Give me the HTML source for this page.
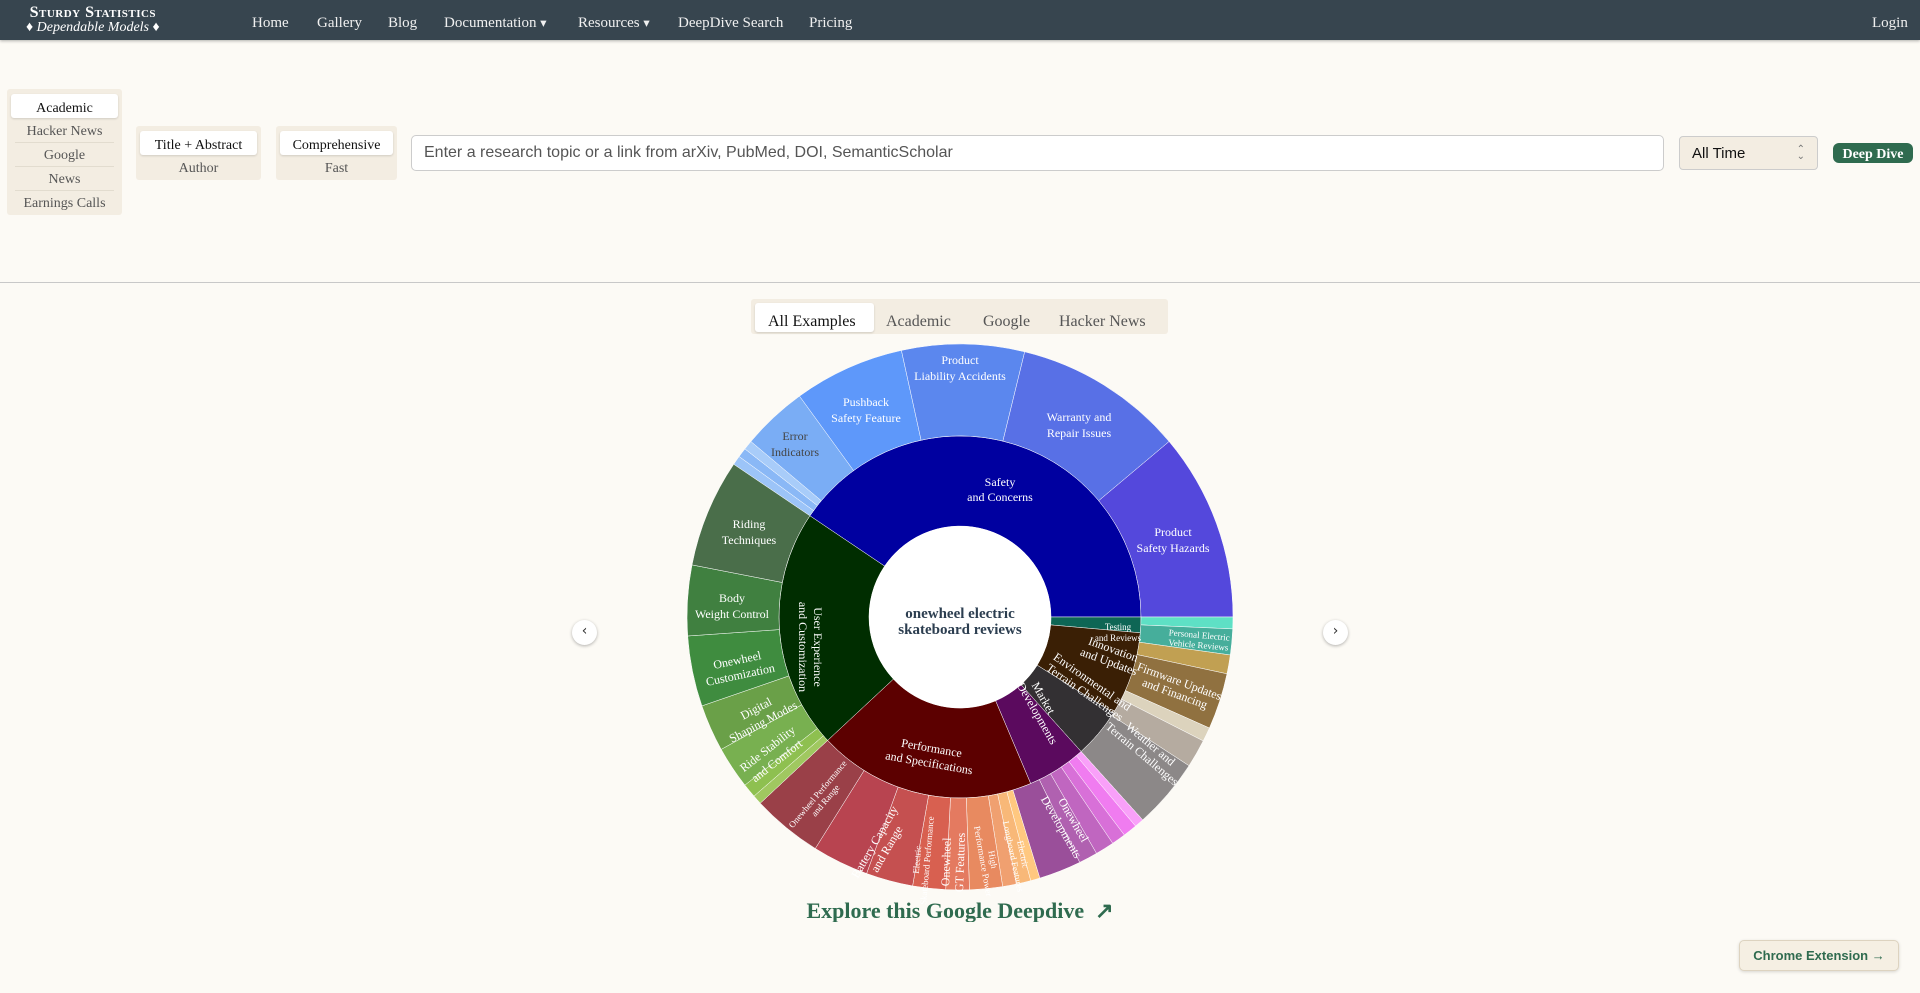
<!DOCTYPE html>
<html><head><meta charset="utf-8">
<style>
*{box-sizing:border-box;margin:0;padding:0}
body{width:1920px;height:993px;overflow:hidden;background:#fcfaf5;font-family:"Liberation Serif",serif;position:relative;color:#333}
.nav{position:absolute;left:0;top:0;width:1920px;height:40px;background:#37454f;color:#eee;box-shadow:0 1px 3px rgba(0,0,0,.3)}
.logo{position:absolute;left:26px;top:5px;color:#fff;text-align:center;line-height:15px}
.logo .a{font-variant:small-caps;font-weight:bold;font-size:16px;letter-spacing:.5px}
.logo .b{font-style:italic;font-size:14px}
.nav .i{position:absolute;top:15px;font-size:15px;color:#f0f0f0}
.pan{position:absolute;background:#f3ede2;border-radius:3px;text-align:center;font-size:14px;color:#555}
.pan div{height:24px;line-height:26px;border-bottom:1px solid #e2dccf;margin:0 8px}
.pan div.on{background:#fff;color:#111;border-radius:3px;margin:5px 4px 1px;box-shadow:0 1px 2px rgba(0,0,0,.15);border:none;line-height:30px}
.inp{position:absolute;left:411px;top:135px;width:1253px;height:36px;border:1px solid #ccc;border-radius:5px;background:#fff;font-family:"Liberation Sans",sans-serif;font-size:16px;color:#555;padding:8px 12px}
.sel{position:absolute;left:1679px;top:136px;width:139px;height:34px;border:1px solid #ccc;border-radius:4px;background:#f3ede2;font-family:"Liberation Sans",sans-serif;font-size:15px;color:#111;padding:8px 12px}
.btn{position:absolute;left:1833px;top:143px;width:80px;height:20px;background:#2f6b4f;border-radius:6px;color:#fff;font-weight:bold;font-size:14px;text-align:center;line-height:24px;overflow:hidden}
.hr{position:absolute;left:0;top:282px;width:1920px;height:1px;background:#c8c8c8}
.tabs{position:absolute;left:751px;top:299px;width:417px;height:35px;background:#f3ede2;border-radius:3px}
.tabs span{position:absolute;top:14px;font-size:16px;color:#555}
.arr{position:absolute;width:25px;height:25px;border-radius:50%;background:#fff;box-shadow:0 1px 3px rgba(0,0,0,.3);text-align:center;line-height:23px;font-family:"DejaVu Sans",sans-serif;font-size:14px;color:#333}
.ce{position:absolute;left:1739px;top:940px;width:160px;height:31px;background:#f5efe3;border:1px solid #ddd3c0;border-radius:5px;color:#2f6b4f;font-family:"Liberation Sans",sans-serif;font-weight:bold;font-size:13px;text-align:center;line-height:29px;box-shadow:0 1px 3px rgba(0,0,0,.15)}
svg text{font-family:"Liberation Serif",serif;fill:#fff;text-anchor:middle}
</style></head><body>
<div class="nav">
<div class="logo"><div class="a">Sturdy Statistics</div><div class="b">♦ Dependable Models ♦</div></div>
<span class="i" style="left:252px">Home</span>
<span class="i" style="left:317px">Gallery</span>
<span class="i" style="left:388px">Blog</span>
<span class="i" style="left:444px">Documentation <small>▾</small></span>
<span class="i" style="left:578px">Resources <small>▾</small></span>
<span class="i" style="left:678px">DeepDive Search</span>
<span class="i" style="left:809px">Pricing</span>
<span class="i" style="left:1872px">Login</span>
</div>
<div class="pan" style="left:7px;top:89px;width:115px;height:126px"><div class="on">Academic</div><div>Hacker News</div><div>Google</div><div>News</div><div style="border:none">Earnings Calls</div></div>
<div class="pan" style="left:136px;top:126px;width:125px;height:54px"><div class="on">Title + Abstract</div><div style="border:none">Author</div></div>
<div class="pan" style="left:276px;top:126px;width:121px;height:54px"><div class="on">Comprehensive</div><div style="border:none">Fast</div></div>
<div class="inp">Enter a research topic or a link from arXiv, PubMed, DOI, SemanticScholar</div>
<div class="sel">All Time<span style="position:absolute;right:12px;top:9px;font-size:10px;color:#777;line-height:7px">⌃<br>⌄</span></div>
<div class="btn">Deep Dive</div>
<div class="hr"></div>
<div class="tabs">
<div style="position:absolute;left:4px;top:4px;width:119px;height:29px;background:#fff;border-radius:3px;box-shadow:0 1px 2px rgba(0,0,0,.15)"></div>
<span style="left:17px;color:#111">All Examples</span>
<span style="left:135px">Academic</span>
<span style="left:232px">Google</span>
<span style="left:308px">Hacker News</span>
</div>
<div class="arr" style="left:572px;top:620px">‹</div>
<div class="arr" style="left:1323px;top:620px">›</div>
<svg id="sb" width="1920" height="993" style="position:absolute;left:0;top:0">
<g id="arcs"></g>
<circle cx="960" cy="617" r="91" fill="#fff"/>
<text x="960" y="618" style="fill:#2c3e50;font-weight:bold;font-size:15px">onewheel electric</text>
<text x="960" y="634" style="fill:#2c3e50;font-weight:bold;font-size:15px">skateboard reviews</text>
<g style="font-size:12px">
<text x="1000" y="486">Safety</text><text x="1000" y="501">and Concerns</text>
<text x="960" y="364">Product</text><text x="960" y="380">Liability Accidents</text>
<text x="866" y="406">Pushback</text><text x="866" y="422">Safety Feature</text>
<text x="795" y="440" style="fill:#444">Error</text><text x="795" y="456" style="fill:#444">Indicators</text>
<text x="1079" y="421">Warranty and</text><text x="1079" y="437">Repair Issues</text>
<text x="1173" y="536">Product</text><text x="1173" y="552">Safety Hazards</text>
<text x="749" y="528">Riding</text><text x="749" y="544">Techniques</text>
<text x="732" y="602">Body</text><text x="732" y="618">Weight Control</text>
<g transform="translate(738,664) rotate(-12)"><text y="0">Onewheel</text><text y="15">Customization</text></g>
<g transform="translate(758,712) rotate(-28)"><text y="0">Digital</text><text y="15">Shaping Modes</text></g>
<g transform="translate(770,752) rotate(-38)"><text y="0">Ride Stability</text><text y="15">and Comfort</text></g>
<g transform="translate(814,647) rotate(90)"><text y="0">User Experience</text><text y="15">and Customization</text></g>
<g transform="translate(931,752) rotate(10)"><text y="0">Performance</text><text y="15">and Specifications</text></g>
<g transform="translate(1040,700) rotate(60)"><text y="0">Market</text><text y="13">and Developments</text></g>
<g transform="translate(1090,685) rotate(35)"><text y="0">Environmental and</text><text y="13">Terrain Challenges</text></g>
<g transform="translate(1112,653) rotate(20)"><text y="0">Innovation</text><text y="13">and Updates</text></g>
<g transform="translate(1148,747) rotate(40)"><text y="0">Weather and</text><text y="13">Terrain Challenges</text></g>
<g transform="translate(1178,685) rotate(20)"><text y="0">Firmware Updates</text><text y="13">and Financing</text></g>
<g transform="translate(1070,822) rotate(60)"><text y="0">Onewheel</text><text y="14">Developments</text></g>
<g transform="translate(878,844) rotate(-60)"><text y="0">Battery Capacity</text><text y="14">and Range</text></g>
<g transform="translate(950,862) rotate(-88)"><text y="0">Onewheel</text><text y="14">GT Features</text></g>
</g>
<g style="font-size:9px">
<text x="1118" y="630">Testing</text><text x="1118" y="641">and Reviews</text>
<g transform="translate(1199,638) rotate(5)"><text y="0">Personal Electric</text><text y="10">Vehicle Reviews</text></g>
<g transform="translate(820,796) rotate(-50)"><text y="0">Onewheel Performance</text><text y="10">and Range</text></g>
<g transform="translate(920,860) rotate(-85)"><text y="0">Electric</text><text y="10">Skateboard Performance</text></g>
<g transform="translate(990,860) rotate(80)"><text y="0">High</text><text y="10">Performance Power</text></g>
<g transform="translate(1020,855) rotate(78)"><text y="0">Electric</text><text y="10">Longboard Features</text></g>
</g>
</svg>
<div style="position:absolute;left:0;top:898px;width:1920px;text-align:center;font-size:22px;font-weight:bold;color:#2f6b4f;height:24px;overflow:hidden">Explore this Google Deepdive &nbsp;↗</div>
<div class="ce">Chrome Extension →</div>
<script>
var cx=960,cy=617;
function P(r,a){a=a*Math.PI/180;return (cx+r*Math.sin(a)).toFixed(1)+","+(cy-r*Math.cos(a)).toFixed(1);}
function arc(r0,r1,a0,a1,c){if(a1<a0)a1+=360;var l=(a1-a0)>180?1:0;
return '<path fill="'+c+'" stroke="#fff" stroke-width="0.5" d="M'+P(r0,a0)+' L'+P(r1,a0)+' A'+r1+','+r1+' 0 '+l+' 1 '+P(r1,a1)+' L'+P(r0,a1)+' A'+r0+','+r0+' 0 '+l+' 0 '+P(r0,a0)+'Z"/>';}
var inner=[[304,450,"#0000a0"],[90,95,"#0e6655"],[95,122,"#3a1f05"],[122,138,"#333033"],[138,157,"#5b0a5e"],[157,227,"#5c0000"],[227,304,"#002d00"]];
var outer=[[304,306,"#9cc4f8"],[306,308,"#8ab8f6"],[308,310,"#a8ccf9"],[310,324,"#7aadf5"],[324,347.6,"#5e98fa"],[347.6,373.7,"#5b87ee"],[13.7,50,"#5870e6"],[50,90,"#5448dc"],
[90,92.5,"#5ee0c5"],[92.5,98,"#46ae9b"],[98,102,"#c1a052"],[102,114,"#907140"],[114,117,"#dcd3bd"],[117,123,"#b5aba0"],[123,138,"#8c8888"],[138,140,"#f9a0f9"],[140,143,"#f07cf0"],[143,146,"#d870d8"],[146,150,"#c066c0"],[150,154,"#b061b0"],[154,163,"#9a4f9a"],[163,165,"#ffc880"],[165,168,"#f8b878"],[168,171,"#f0a070"],[171,178,"#e88a60"],[178,183,"#e47a60"],[183,190,"#d86050"],[190,200,"#c55050"],[200,212,"#b84450"],[212,227,"#9a4048"],[227,229,"#a0c860"],[229,232,"#8ec050"],[232,241,"#78b050"],[241,251,"#6aa048"],[251,266,"#3f8c3f"],[266,281,"#408040"],[281,304,"#4a6e4a"]];
var h="";inner.forEach(function(s){h+=arc(91,181,s[0],s[1],s[2]);});
outer.forEach(function(s){h+=arc(181,273,s[0],s[1],s[2]);});
document.getElementById("arcs").innerHTML=h;
</script>
</body></html>
